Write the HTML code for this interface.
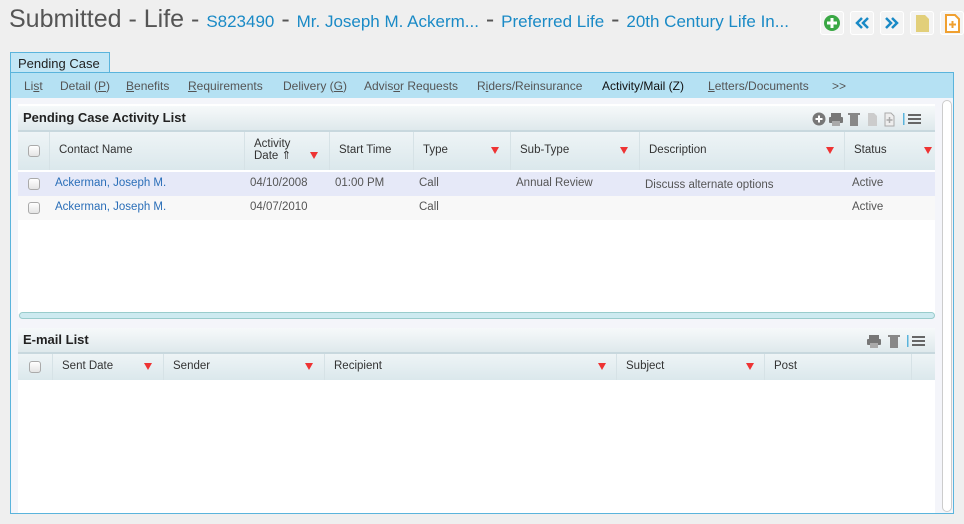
<!DOCTYPE html>
<html><head><meta charset="utf-8"><style>
*{box-sizing:border-box;margin:0;padding:0}
body{width:964px;height:524px;background:#efefef;font-family:"Liberation Sans",sans-serif;font-size:12px;color:#333;position:relative;overflow:hidden}
.abs{position:absolute}
.title{left:9px;top:5px;font-size:25px;color:#555;white-space:nowrap}
.title a{color:#1a8ac6;font-size:17px;text-decoration:none}
.btn{top:11px;width:24px;height:24px;border:1px solid #fff;border-radius:3px;background:#f4f4f4}
.tab{left:10px;top:52px;width:100px;height:22px;background:#c3e6f5;border:1px solid #5ab4dc;border-bottom:none;font-size:13px;padding:3px 0 0 7px;color:#222}
.nav{left:10px;top:72px;width:944px;height:27px;background:#b5e1f3;border:1px solid #5ab4dc;border-bottom:none}
.nav span{position:absolute;top:6px;font-size:12px;color:#555;white-space:nowrap}
.panel{left:10px;top:98px;width:944px;height:416px;background:#f4f5fa;border:1px solid #5ab4dc;border-top:none}
.sh{left:18px;width:917px;height:24px;background:linear-gradient(#f6f9fa,#dfe9ec);font-weight:bold;font-size:13px;padding:4px 0 0 5px;color:#222}
.th{left:18px;width:917px;background:linear-gradient(#eef4f6,#dbe8ec);border-top:2px solid #c8d8de}
.th div{position:absolute;top:0;bottom:0;border-right:1px solid #d6e2e6;font-size:11.5px;color:#333}
.th div span{position:absolute;left:9px}
.cb{position:absolute;width:12px;height:12px;border:1px solid #aaa;border-radius:3px;background:linear-gradient(#fff,#e4e4e4)}
.f{position:absolute;width:0;height:0;border-left:4px solid transparent;border-right:4px solid transparent;border-top:7px solid #e33}
.row{left:18px;width:917px;height:24px;font-size:11.5px;color:#555}
.row span{position:absolute;top:5px;white-space:nowrap}
.row a{color:#2a6eb8}
</style></head><body>
<div class="abs title">Submitted - Life - <a>S823490</a> - <a>Mr. Joseph M. Ackerm...</a> - <a>Preferred Life</a> - <a>20th Century Life In...</a></div>
<div class="abs btn" style="left:820px"><svg width="22" height="22"><circle cx="11" cy="11" r="8" fill="#3aa845"/><path d="M11 6v10M6 11h10" stroke="#fff" stroke-width="3"/></svg></div>
<div class="abs btn" style="left:850px"><svg width="22" height="22"><path d="M11 6l-5 5 5 5M17 6l-5 5 5 5" stroke="#1a8ac6" stroke-width="2.5" fill="none"/></svg></div>
<div class="abs btn" style="left:880px"><svg width="22" height="22"><path d="M5 6l5 5-5 5M11 6l5 5-5 5" stroke="#1a8ac6" stroke-width="2.5" fill="none"/></svg></div>
<div class="abs btn" style="left:910px"><svg width="22" height="22"><path d="M5 3h9l4 4v13H5z" fill="#e2cf7a"/></svg></div>
<div class="abs btn" style="left:940px"><svg width="22" height="22"><path d="M5 3h9l4 4v13H5z" fill="#fff" stroke="#f0a030" stroke-width="2"/><path d="M11.5 9v7M8 12.5h7" stroke="#f0a030" stroke-width="2"/></svg></div>
<div class="abs tab">Pending Case</div>
<div class="abs nav">
<span style="left:13px">Li<u>s</u>t</span><span style="left:49px">Detail (<u>P</u>)</span><span style="left:115px"><u>B</u>enefits</span><span style="left:177px"><u>R</u>equirements</span><span style="left:272px">Delivery (<u>G</u>)</span><span style="left:353px">Advis<u>o</u>r Requests</span><span style="left:466px">R<u>i</u>ders/Reinsurance</span><span style="left:591px;color:#111">Activity/Mail (Z)</span><span style="left:697px"><u>L</u>etters/Documents</span><span style="left:821px">&gt;&gt;</span>
</div>
<div class="abs panel"></div>
<div class="abs" style="left:942px;top:100px;width:10px;height:412px;border:1px solid #ccc;border-radius:5px;background:#fff"></div>
<div class="abs" style="left:18px;top:104px;width:917px;height:210px;background:#fff"></div>
<div class="abs sh" style="top:106px">Pending Case Activity List</div>
<svg class="abs" style="left:810px;top:110px" width="120" height="18">
<circle cx="9" cy="9" r="6.5" fill="#777"/><path d="M9 5.5v7M5.5 9h7" stroke="#fff" stroke-width="2"/>
<rect x="21" y="3" width="10" height="4" fill="#777"/><rect x="19" y="7" width="14" height="6" rx="1" fill="#777"/><rect x="22" y="11" width="8" height="5" fill="#aaa"/>
<rect x="40" y="4" width="8" height="12" fill="#888"/><rect x="38" y="3" width="12" height="2" fill="#888"/>
<path d="M58 3h6l3 3v10h-9z" fill="#ccc"/>
<path d="M75 3h6l3 3v10h-9z" fill="#eee" stroke="#aaa"/><path d="M79.5 7v6M76.5 10h6" stroke="#aaa" stroke-width="1.5"/>
<rect x="93" y="3" width="1.5" height="12" fill="#5ab4dc"/>
<path d="M98 5h13M98 9h13M98 13h13" stroke="#666" stroke-width="2"/>
</svg>
<div class="abs th" style="top:130px;height:40px">
<div style="left:0;width:32px"><i class="cb" style="left:10px;top:13px"></i></div>
<div style="left:32px;width:195px"><span style="top:12px">Contact Name</span></div>
<div style="left:227px;width:85px"><span style="top:6px;line-height:12px">Activity<br>Date ⇑</span><i class="f" style="left:65px;top:20px"></i></div>
<div style="left:312px;width:84px"><span style="top:12px">Start Time</span></div>
<div style="left:396px;width:97px"><span style="top:12px">Type</span><i class="f" style="left:77px;top:15px"></i></div>
<div style="left:493px;width:129px"><span style="top:12px">Sub-Type</span><i class="f" style="left:109px;top:15px"></i></div>
<div style="left:622px;width:205px"><span style="top:12px">Description</span><i class="f" style="left:186px;top:15px"></i></div>
<div style="left:827px;width:90px;border:none"><span style="top:12px">Status</span><i class="f" style="left:79px;top:15px"></i></div>
</div>
<div class="abs row" style="top:172px;background:#e6e9f8"><i class="cb" style="left:10px;top:6px"></i><span style="left:37px"><a>Ackerman, Joseph M.</a></span><span style="left:232px">04/10/2008</span><span style="left:317px">01:00 PM</span><span style="left:401px">Call</span><span style="left:498px">Annual Review</span><span style="left:627px;top:7px">Discuss alternate options</span><span style="left:834px">Active</span></div>
<div class="abs row" style="top:196px;background:#f8f8f8"><i class="cb" style="left:10px;top:6px"></i><span style="left:37px"><a>Ackerman, Joseph M.</a></span><span style="left:232px">04/07/2010</span><span style="left:401px">Call</span><span style="left:834px">Active</span></div>
<div class="abs" style="left:19px;top:312px;width:916px;height:7px;border:1px solid #9cc;border-radius:4px;background:#cdeaf0"></div>
<div class="abs sh" style="top:328px">E-mail List</div>
<svg class="abs" style="left:865px;top:332px" width="70" height="18">
<rect x="4" y="3" width="10" height="4" fill="#777"/><rect x="2" y="7" width="14" height="6" rx="1" fill="#777"/><rect x="5" y="11" width="8" height="5" fill="#aaa"/>
<rect x="25" y="4" width="8" height="12" fill="#888"/><rect x="23" y="3" width="12" height="2" fill="#888"/>
<rect x="42" y="3" width="1.5" height="12" fill="#5ab4dc"/>
<path d="M47 5h13M47 9h13M47 13h13" stroke="#666" stroke-width="2"/>
</svg>
<div class="abs th" style="top:352px;height:28px">
<div style="left:0;width:35px"><i class="cb" style="left:11px;top:7px"></i></div>
<div style="left:35px;width:111px"><span style="top:6px">Sent Date</span><i class="f" style="left:91px;top:9px"></i></div>
<div style="left:146px;width:161px"><span style="top:6px">Sender</span><i class="f" style="left:141px;top:9px"></i></div>
<div style="left:307px;width:292px"><span style="top:6px">Recipient</span><i class="f" style="left:273px;top:9px"></i></div>
<div style="left:599px;width:148px"><span style="top:6px">Subject</span><i class="f" style="left:129px;top:9px"></i></div>
<div style="left:747px;width:147px"><span style="top:6px">Post</span></div>
</div>
<div class="abs" style="left:18px;top:380px;width:917px;height:133px;background:#fff"></div>
</body></html>
